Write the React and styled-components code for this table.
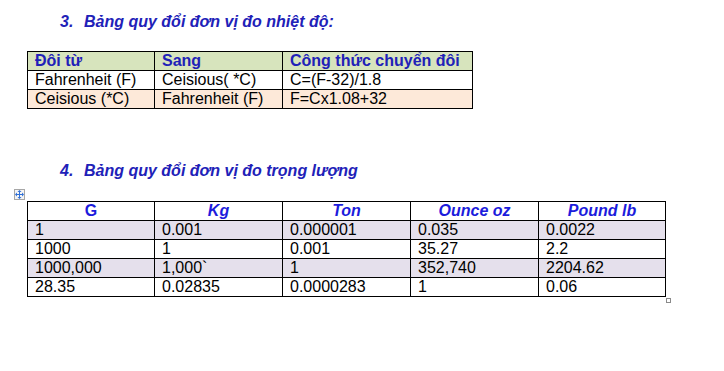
import React from "react"
import styled, { createGlobalStyle } from "styled-components"

const GlobalStyle = createGlobalStyle`
    html, body {
        margin: 0;
        padding: 0;
        background: #ffffff;
    }
    body {
        font-family: "Liberation Sans", Arial, sans-serif;
        color: #000;
    }
`

const Page = styled.div`
    width: 724px;
    height: 371px;
    padding-top: 13px;
    box-sizing: border-box;
`

const Heading = styled.div`
    display: flex;
    margin-left: 60px;
    margin-top: ${props => props.top || 0}px;
    font-size: 16px;
    line-height: 18px;
    font-weight: bold;
    font-style: italic;
    color: #2121b8;
`

const HeadingNum = styled.span`
    width: 24px;
`

const TableWrap = styled.div`
    position: relative;
    margin-left: 27px;
    margin-top: ${props => props.top}px;
    width: max-content;
`

const Grid = styled.div`
    display: grid;
    grid-template-columns: ${props => props.cols};
    border-top: 1px solid #000;
    border-left: 1px solid #000;
`

const Cell = styled.div`
    box-sizing: border-box;
    height: 19px;
    border-right: 1px solid #000;
    border-bottom: 1px solid #000;
    padding: 0 0 0 7px;
    font-size: 16px;
    line-height: 18px;
    white-space: nowrap;
    overflow: hidden;
    background: ${props => props.bg || "#fff"};
`

const HeadCell = styled(Cell)`
    font-weight: bold;
    color: ${props => props.color || "#2121b8"};
    font-style: ${props => props.italic ? "italic" : "normal"};
    text-align: ${props => props.center ? "center" : "left"};
    padding-left: ${props => props.center ? 0 : 7}px;
`

const MoveHandle = styled.div`
    position: absolute;
    left: -13px;
    top: -12px;
    width: 11px;
    height: 11px;
    box-sizing: border-box;
    border: 1px solid #a7a7a7;
    background: #f4f4f4;
    display: flex;
    align-items: center;
    justify-content: center;
`

const SizeHandle = styled.div`
    position: absolute;
    right: -5px;
    bottom: -6px;
    width: 5px;
    height: 5px;
    box-sizing: border-box;
    border: 1px solid #8a8a8a;
    background: #fff;
`

const tempRows = [
    ["Fahrenheit (F)", "Ceisious( *C)", "C=(F-32)/1.8"],
    ["Ceisious (*C)", "Fahrenheit (F)", "F=Cx1.08+32"],
]

const weightHead = [
    { label: "G", italic: false },
    { label: "Kg", italic: true },
    { label: "Ton", italic: true },
    { label: "Ounce oz", italic: true },
    { label: "Pound lb", italic: true },
]

const weightRows = [
    ["1", "0.001", "0.000001", "0.035", "0.0022"],
    ["1000", "1", "0.001", "35.27", "2.2"],
    ["1000,000", "1,000`", "1", "352,740", "2204.62"],
    ["28.35", "0.02835", "0.0000283", "1", "0.06"],
]

const MoveIcon = () => (
    <svg width="9" height="9" viewBox="0 0 9 9">
        <g fill="#2f6fd6">
            <rect x="4" y="1" width="1" height="7" />
            <rect x="1" y="4" width="7" height="1" />
            <path d="M4.5 0 L6.5 2 L2.5 2 Z" />
            <path d="M4.5 9 L6.5 7 L2.5 7 Z" />
            <path d="M0 4.5 L2 2.5 L2 6.5 Z" />
            <path d="M9 4.5 L7 2.5 L7 6.5 Z" />
        </g>
    </svg>
)

const App = () => {
    return (
        <Page>
            <GlobalStyle />
            <Heading>
                <HeadingNum>3.</HeadingNum>
                <span>Bảng quy đổi đơn vị đo nhiệt độ:</span>
            </Heading>
            <TableWrap top={20}>
                <Grid cols="127px 128px 190px">
                    <HeadCell bg="#d7e4bd">Đôi từ</HeadCell>
                    <HeadCell bg="#d7e4bd">Sang</HeadCell>
                    <HeadCell bg="#d7e4bd">Công thức chuyển đôi</HeadCell>
                    {tempRows.map((row, i) =>
                        row.map((v, j) => (
                            <Cell key={`${i}-${j}`} bg={i === 1 ? "#fde9d9" : "#fff"}>{v}</Cell>
                        ))
                    )}
                </Grid>
            </TableWrap>
            <Heading top={53}>
                <HeadingNum>4.</HeadingNum>
                <span>Bảng quy đổi đơn vị đo trọng lượng</span>
            </Heading>
            <TableWrap top={21}>
                <MoveHandle><MoveIcon /></MoveHandle>
                <Grid cols="127px 128px 128px 128px 127px">
                    {weightHead.map(h => (
                        <HeadCell key={h.label} center italic={h.italic} color="#1c1cdc">{h.label}</HeadCell>
                    ))}
                    {weightRows.map((row, i) =>
                        row.map((v, j) => (
                            <Cell key={`${i}-${j}`} bg={i % 2 === 0 ? "#e5e0ec" : "#fff"}>{v}</Cell>
                        ))
                    )}
                </Grid>
                <SizeHandle />
            </TableWrap>
        </Page>
    )
}

export default App
